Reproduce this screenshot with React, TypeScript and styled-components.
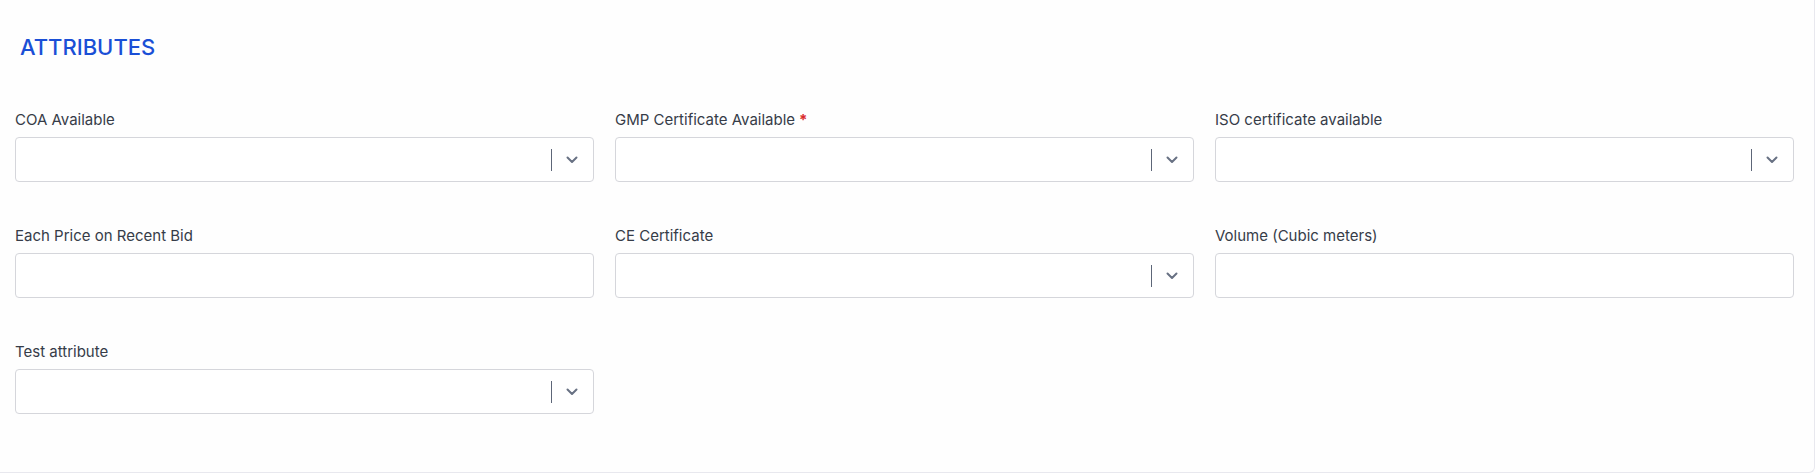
import React from 'react';
import styled, { createGlobalStyle } from 'styled-components';

const GlobalStyle = createGlobalStyle`
  html, body {
    margin: 0;
    padding: 0;
    background: #ffffff;
  }
  body {
    font-family: Inter, "Noto Sans", "Liberation Sans", sans-serif;
    -webkit-font-smoothing: antialiased;
  }
`;

const Card = styled.section`
  box-sizing: border-box;
  width: 1815px;
  height: 473px;
  background: #fefefe;
  border-right: 1px solid #e8e8ee;
  border-bottom: 1px solid #e8e8ee;
  border-bottom-right-radius: 6px;
  padding: 33px 20px 0 15px;
`;

const Title = styled.h2`
  margin: 0 0 48px 5px;
  font-size: 22px;
  line-height: 29px;
  font-weight: 500;
  color: #1a4fd6;
`;

const Grid = styled.div`
  display: grid;
  grid-template-columns: repeat(3, 1fr);
  column-gap: 21px;
  row-gap: 44px;
`;

const Field = styled.div`
  display: flex;
  flex-direction: column;
`;

const Label = styled.label`
  font-size: 15px;
  line-height: 20px;
  font-weight: 400;
  color: #363c48;
  margin-bottom: 7px;
`;

const Required = styled.span`
  color: #d92a2a;
  font-weight: 700;
  margin-left: 4px;
`;

const Box = styled.div`
  box-sizing: border-box;
  height: 45px;
  border: 1px solid #d5d6db;
  border-radius: 4px;
  background: #ffffff;
  display: flex;
  align-items: center;
  justify-content: flex-end;
  padding-right: 15px;
`;

const Divider = styled.span`
  width: 1px;
  height: 22px;
  background: #5d6678;
  margin-right: 14px;
`;

const Chevron = () => (
  <svg width="12" height="8" viewBox="0 0 12 8" fill="none">
    <path
      d="M1.5 1.5L6 6L10.5 1.5"
      stroke="#687183"
      strokeWidth="2"
      strokeLinecap="round"
      strokeLinejoin="round"
    />
  </svg>
);

interface FieldDef {
  label: string;
  select?: boolean;
  required?: boolean;
}

const fields: FieldDef[] = [
  { label: 'COA Available', select: true },
  { label: 'GMP Certificate Available', select: true, required: true },
  { label: 'ISO certificate available', select: true },
  { label: 'Each Price on Recent Bid' },
  { label: 'CE Certificate', select: true },
  { label: 'Volume (Cubic meters)' },
  { label: 'Test attribute', select: true },
];

export default function App() {
  return (
    <>
      <GlobalStyle />
      <Card>
        <Title>ATTRIBUTES</Title>
        <Grid>
          {fields.map((f) => (
            <Field key={f.label}>
              <Label>
                {f.label}
                {f.required && <Required>*</Required>}
              </Label>
              <Box>
                {f.select && (
                  <>
                    <Divider />
                    <Chevron />
                  </>
                )}
              </Box>
            </Field>
          ))}
        </Grid>
      </Card>
    </>
  );
}
